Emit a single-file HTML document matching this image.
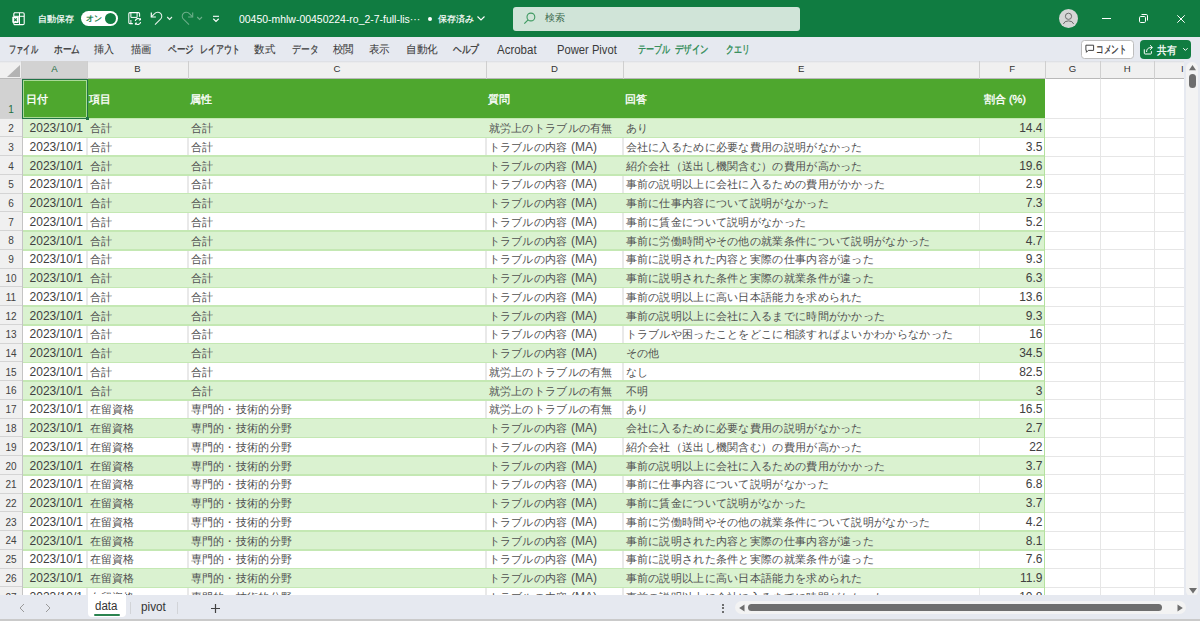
<!DOCTYPE html><html><head><meta charset="utf-8"><style>
*{margin:0;padding:0;box-sizing:border-box}
html,body{width:1200px;height:621px;overflow:hidden;background:#fff;font-family:"Liberation Sans",sans-serif}
.a{position:absolute}
.t{position:absolute;white-space:nowrap;line-height:1}
svg{position:absolute;overflow:visible}
</style></head><body>
<div class="a" style="left:0;top:0;width:1200px;height:37px;background:#107C41"></div>
<svg style="left:8px;top:8px" width="22" height="22" viewBox="0 0 22 22">
<path d="M6.4 4.8 H15 a1.2 1.2 0 0 1 1.2 1.2 V15.4 a1.2 1.2 0 0 1 -1.2 1.2 H7 a1.2 1.2 0 0 1 -1.2 -1.2 V14.5" fill="none" stroke="#fff" stroke-width="1.1"/>
<path d="M5.8 8.5 V6 a1.2 1.2 0 0 1 1.2 -1.2" fill="none" stroke="#fff" stroke-width="1.1"/>
<path d="M11.5 4.8 V16.6 M5.8 8.3 H16.2" stroke="#fff" stroke-width="1"/>
<rect x="4.3" y="8.6" width="6.4" height="6.4" rx="1" fill="#fff"/>
<path d="M6.2 10.5 L8.8 13.1 M8.8 10.5 L6.2 13.1" stroke="#107C41" stroke-width="1.1"/>
</svg>
<span class="t" id="t_autosave" style="left:38.00px;top:15.00px;font-size:9.1px;color:#fff;-webkit-text-stroke:0.2px #fff;">自動保存</span>
<div class="a" style="left:81px;top:10.5px;width:37px;height:15.5px;border-radius:8px;background:#fff"></div>
<div class="a" style="left:104.5px;top:13px;width:11px;height:11px;border-radius:50%;background:#107C41"></div>
<span class="t" id="t_on" style="left:86.00px;top:15.19px;font-size:7.6px;color:#107C41;-webkit-text-stroke:0.3px #107C41;">オン</span>
<svg style="left:124px;top:8px" width="22" height="22" viewBox="0 0 22 22">
<path d="M8.8 15.6 H6 a1.2 1.2 0 0 1 -1.2 -1.2 V5.8 a1.2 1.2 0 0 1 1.2 -1.2 H14.4 a1.2 1.2 0 0 1 1.2 1.2 V8.8" fill="none" stroke="#fff" stroke-width="1.05"/>
<path d="M6.9 4.6 V9.4 H13.1 V4.6" fill="none" stroke="#fff" stroke-width="1"/>
<path d="M6.9 15.6 V12" fill="none" stroke="#fff" stroke-width="1"/>
<path d="M11.3 13 a2.8 2.8 0 0 1 5 -1.4" fill="none" stroke="#fff" stroke-width="1.1"/>
<path d="M16.6 14 a2.8 2.8 0 0 1 -5 1.4" fill="none" stroke="#fff" stroke-width="1.1"/>
<path d="M16.5 10.3 V12 H14.8" fill="none" stroke="#fff" stroke-width="1"/>
<path d="M11.4 16.8 V15.1 H13.1" fill="none" stroke="#fff" stroke-width="1"/>
</svg>
<svg style="left:146px;top:8px" width="30" height="22" viewBox="0 0 30 22">
<path d="M5.3 4.6 V9 H9.9" fill="none" stroke="#fff" stroke-width="1.2"/>
<path d="M5.4 8.9 L8.6 5.7 A4.05 4.05 0 1 1 14.3 11.4 L9 16.6" fill="none" stroke="#fff" stroke-width="1.05" opacity="0.9"/>
<path d="M21.2 9 L23.6 11.5 L26 9" fill="none" stroke="#fff" stroke-width="1.1" opacity="0.9"/>
</svg>
<svg style="left:176px;top:8px" width="30" height="22" viewBox="0 0 30 22" opacity="0.38">
<path d="M16.7 4.6 V9 H12.1" fill="none" stroke="#fff" stroke-width="1.1"/>
<path d="M16.6 8.9 L13.4 5.7 A4.05 4.05 0 1 0 7.7 11.4 L13 16.6" fill="none" stroke="#fff" stroke-width="1.05"/>
<path d="M21.2 9 L23.6 11.5 L26 9" fill="none" stroke="#fff" stroke-width="1.1"/>
</svg>
<svg style="left:208px;top:8px" width="16" height="22" viewBox="0 0 16 22"><path d="M5 8.3 H11" stroke="#fff" stroke-width="1.1"/><path d="M5.3 10.8 L8 13.4 L10.7 10.8" fill="none" stroke="#fff" stroke-width="1.2"/></svg>
<span class="t" id="t_fname" style="left:239.00px;top:13.60px;font-size:10.5px;color:#fff;transform:scaleX(0.9951);transform-origin:0 0;">00450-mhlw-00450224-ro_2-7-full-lis···</span>
<div class="a" style="left:428.3px;top:17.4px;width:3.8px;height:3.8px;border-radius:50%;background:#fff"></div>
<span class="t" id="t_saved" style="left:438.00px;top:15.39px;font-size:9px;color:#fff;-webkit-text-stroke:0.2px #fff;">保存済み</span>
<svg style="left:474px;top:12px" width="14" height="12" viewBox="0 0 14 12"><path d="M3.5 4.5 L7 8 L10.5 4.5" fill="none" stroke="#fff" stroke-width="1.1"/></svg>
<div class="a" style="left:513.3px;top:7px;width:287px;height:23.5px;border-radius:3px;background:#D0E4D8"></div>
<svg style="left:515px;top:6px" width="30" height="26" viewBox="0 0 30 26">
<circle cx="15.9" cy="11" r="3.9" fill="none" stroke="#3F9A62" stroke-width="1.1"/>
<path d="M13.1 13.8 L9.3 17.6" stroke="#3F9A62" stroke-width="1.2"/>
</svg>
<span class="t" id="t_search" style="left:545.00px;top:13.00px;font-size:10.3px;color:#3B6A4E;">検索</span>
<div class="a" style="left:1059.3px;top:9px;width:19px;height:19px;border-radius:50%;background:#D6D6D6"></div>
<svg style="left:1059.3px;top:9px" width="19" height="19" viewBox="0 0 19 19">
<circle cx="9.5" cy="7.3" r="3.1" fill="none" stroke="#6b6b6b" stroke-width="1"/>
<path d="M4.3 15 a5.4 4.3 0 0 1 10.4 0" fill="none" stroke="#6b6b6b" stroke-width="1"/>
</svg>
<div class="a" style="left:1102px;top:18px;width:8.5px;height:1px;background:#fff"></div>
<svg style="left:1138px;top:13px" width="11" height="11" viewBox="0 0 11 11">
<rect x="1.5" y="3.5" width="6" height="6" rx="1.2" fill="none" stroke="#fff" stroke-width="1"/>
<path d="M3.5 1.5 H8.2 a1.3 1.3 0 0 1 1.3 1.3 V7.5" fill="none" stroke="#fff" stroke-width="1"/>
</svg>
<svg style="left:1176px;top:14px" width="10" height="10" viewBox="0 0 10 10">
<path d="M1.3 1.3 L8.7 8.7 M8.7 1.3 L1.3 8.7" stroke="#fff" stroke-width="1"/>
</svg>
<div class="a" style="left:0;top:37px;width:1200px;height:24px;background:#E6E9F0"></div>
<span class="t" id="tab0" style="left:8.93px;top:44.20px;font-size:11px;color:#3a3a3a;transform:scaleX(0.6557);transform-origin:0 0;-webkit-text-stroke:0.35px currentColor;">ファイル</span>
<span class="t" id="tab1" style="left:53.79px;top:44.20px;font-size:11px;color:#3a3a3a;transform:scaleX(0.7879);transform-origin:0 0;-webkit-text-stroke:0.35px currentColor;">ホーム</span>
<span class="t" id="tab2" style="left:94.41px;top:44.20px;font-size:11px;color:#3a3a3a;transform:scaleX(0.9136);transform-origin:0 0;-webkit-text-stroke:0.05px currentColor;">挿入</span>
<span class="t" id="tab3" style="left:131.00px;top:44.20px;font-size:11px;color:#3a3a3a;transform:scaleX(0.9409);transform-origin:0 0;-webkit-text-stroke:0.05px currentColor;">描画</span>
<span class="t" id="tab4" style="left:168.29px;top:44.20px;font-size:11px;color:#3a3a3a;transform:scaleX(0.7735);transform-origin:0 0;-webkit-text-stroke:0.35px currentColor;">ページ</span>
<span class="t" id="tab5" style="left:199.72px;top:44.20px;font-size:11px;color:#3a3a3a;transform:scaleX(0.7222);transform-origin:0 0;-webkit-text-stroke:0.35px currentColor;">レイアウト</span>
<span class="t" id="tab6" style="left:254.40px;top:44.20px;font-size:11px;color:#3a3a3a;transform:scaleX(0.9568);transform-origin:0 0;-webkit-text-stroke:0.05px currentColor;">数式</span>
<span class="t" id="tab7" style="left:292.00px;top:44.20px;font-size:11px;color:#3a3a3a;transform:scaleX(0.8000);transform-origin:0 0;-webkit-text-stroke:0.2px currentColor;">データ</span>
<span class="t" id="tab8" style="left:333.38px;top:44.20px;font-size:11px;color:#3a3a3a;transform:scaleX(0.9545);transform-origin:0 0;-webkit-text-stroke:0.05px currentColor;">校閲</span>
<span class="t" id="tab9" style="left:369.21px;top:44.20px;font-size:11px;color:#3a3a3a;transform:scaleX(0.9545);transform-origin:0 0;-webkit-text-stroke:0.05px currentColor;">表示</span>
<span class="t" id="tab10" style="left:405.81px;top:44.20px;font-size:11px;color:#3a3a3a;transform:scaleX(0.9625);transform-origin:0 0;-webkit-text-stroke:0.05px currentColor;">自動化</span>
<span class="t" id="tab11" style="left:452.71px;top:44.20px;font-size:11px;color:#3a3a3a;transform:scaleX(0.7941);transform-origin:0 0;-webkit-text-stroke:0.35px currentColor;">ヘルプ</span>
<span class="t" id="tabA" style="left:496.58px;top:44.00px;font-size:12px;color:#3a3a3a;transform:scaleX(0.9571);transform-origin:0 0;">Acrobat</span>
<span class="t" id="tabP" style="left:557.00px;top:44.00px;font-size:12px;color:#3a3a3a;transform:scaleX(0.9338);transform-origin:0 0;">Power Pivot</span>
<span class="t" id="tab_td1" style="left:637.69px;top:44.20px;font-size:11px;color:#2B8A52;transform:scaleX(0.7304);transform-origin:0 0;-webkit-text-stroke:0.35px currentColor;">テーブル</span>
<span class="t" id="tab_td2" style="left:675.00px;top:44.20px;font-size:11px;color:#2B8A52;transform:scaleX(0.7628);transform-origin:0 0;-webkit-text-stroke:0.35px currentColor;">デザイン</span>
<span class="t" id="tab_q" style="left:726.28px;top:44.20px;font-size:11px;color:#2B8A52;transform:scaleX(0.7200);transform-origin:0 0;-webkit-text-stroke:0.35px currentColor;">クエリ</span>
<div class="a" style="left:1081.25px;top:40.25px;width:52.25px;height:18.25px;border-radius:3.5px;background:#fff;border:1px solid #BDBDBD"></div>
<svg style="left:1080px;top:38px" width="20" height="20" viewBox="0 0 20 20">
<path d="M5.9 7.2 H13.6 V12.4 H8.3 L6.4 14.3 V12.4 H5.9 Z" fill="none" stroke="#424242" stroke-width="1"/>
</svg>
<span class="t" id="t_comment" style="left:1096.46px;top:44.20px;font-size:11px;color:#333;transform:scaleX(0.6932);transform-origin:0 0;-webkit-text-stroke:0.3px #333;">コメント</span>
<div class="a" style="left:1140px;top:39.75px;width:50.75px;height:19px;border-radius:4px;background:#107C41"></div>
<svg style="left:1138px;top:38px" width="20" height="20" viewBox="0 0 20 20">
<path d="M6.3 11.3 V15.2 a0.8 0.8 0 0 0 0.8 0.8 H12.6 a0.8 0.8 0 0 0 0.8 -0.8 V13.2" fill="none" stroke="#fff" stroke-width="1"/>
<path d="M8.6 14 C8.6 10.5 10.5 9.5 14.2 9.5" fill="none" stroke="#fff" stroke-width="1"/>
<path d="M12 7.2 L14.4 9.5 L12 11.8" fill="none" stroke="#fff" stroke-width="1"/>
</svg>
<span class="t" id="t_share" style="left:1157.41px;top:44.50px;font-size:10.5px;color:#fff;transform:scaleX(0.8804);transform-origin:0 0;-webkit-text-stroke:0.3px #fff;">共有</span>
<svg style="left:1138px;top:38px" width="60" height="20" viewBox="0 0 60 20"><path d="M45.2 10.2 L47.4 12.4 L49.6 10.2" fill="none" stroke="#fff" stroke-width="1"/></svg>
<div class="a" style="left:0;top:61px;width:1184px;height:18px;background:#F0F0F0;border-bottom:1px solid #B9B9B9"></div>
<div class="a" style="left:0;top:61px;width:1184px;height:2px;background:linear-gradient(#D9DCE2,rgba(240,240,240,0))"></div>
<svg style="left:5px;top:64px" width="16" height="14" viewBox="0 0 16 14"><path d="M15 1 V13 H2 Z" fill="#B3B3B3"/></svg>
<div class="a" style="left:21px;top:61px;width:1px;height:18px;background:#CFCFCF"></div>
<div class="a" style="left:22px;top:61px;width:65px;height:18px;background:#D2D2D2;border-bottom:1px solid #B9B9B9"></div>
<div class="a" style="left:86.5px;top:61px;width:1px;height:18px;background:#CFCFCF"></div>
<span class="t" style="left:22px;top:64px;width:65px;text-align:center;font-size:9.6px;color:#1E6E42">A</span>
<div class="a" style="left:187.5px;top:61px;width:1px;height:18px;background:#CFCFCF"></div>
<span class="t" style="left:87px;top:64px;width:101px;text-align:center;font-size:9.6px;color:#333">B</span>
<div class="a" style="left:485.5px;top:61px;width:1px;height:18px;background:#CFCFCF"></div>
<span class="t" style="left:188px;top:64px;width:298px;text-align:center;font-size:9.6px;color:#333">C</span>
<div class="a" style="left:622.5px;top:61px;width:1px;height:18px;background:#CFCFCF"></div>
<span class="t" style="left:486px;top:64px;width:137px;text-align:center;font-size:9.6px;color:#333">D</span>
<div class="a" style="left:979.0px;top:61px;width:1px;height:18px;background:#CFCFCF"></div>
<span class="t" style="left:623px;top:64px;width:356.5px;text-align:center;font-size:9.6px;color:#333">E</span>
<div class="a" style="left:1044.5px;top:61px;width:1px;height:18px;background:#CFCFCF"></div>
<span class="t" style="left:979.5px;top:64px;width:65.5px;text-align:center;font-size:9.6px;color:#333">F</span>
<div class="a" style="left:1099.5px;top:61px;width:1px;height:18px;background:#CFCFCF"></div>
<span class="t" style="left:1045px;top:64px;width:55px;text-align:center;font-size:9.6px;color:#333">G</span>
<div class="a" style="left:1154.0px;top:61px;width:1px;height:18px;background:#CFCFCF"></div>
<span class="t" style="left:1100px;top:64px;width:54.5px;text-align:center;font-size:9.6px;color:#333">H</span>
<div class="a" style="left:1209.5px;top:61px;width:1px;height:18px;background:#CFCFCF"></div>
<span class="t" style="left:1154.5px;top:64px;width:55.5px;text-align:center;font-size:9.6px;color:#333">I</span>
<div class="a" style="left:0;top:79px;width:22px;height:516px;background:#F0F0F0"></div>
<div class="a" style="left:0;top:79px;width:22px;height:39.5px;background:#D2D2D2"></div>
<span class="t" style="left:0;top:105px;width:22px;text-align:center;font-size:10px;color:#1E6E42">1</span>
<div class="a" style="left:0;top:117.5px;width:22px;height:1px;background:#D4D4D4"></div>
<span class="t" style="left:0;top:124px;width:22px;text-align:center;font-size:10px;color:#424242">2</span>
<div class="a" style="left:0;top:136.25px;width:22px;height:1px;background:#D4D4D4"></div>
<span class="t" style="left:0;top:143px;width:22px;text-align:center;font-size:10px;color:#424242">3</span>
<div class="a" style="left:0;top:155.0px;width:22px;height:1px;background:#D4D4D4"></div>
<span class="t" style="left:0;top:162px;width:22px;text-align:center;font-size:10px;color:#424242">4</span>
<div class="a" style="left:0;top:173.75px;width:22px;height:1px;background:#D4D4D4"></div>
<span class="t" style="left:0;top:180px;width:22px;text-align:center;font-size:10px;color:#424242">5</span>
<div class="a" style="left:0;top:192.5px;width:22px;height:1px;background:#D4D4D4"></div>
<span class="t" style="left:0;top:199px;width:22px;text-align:center;font-size:10px;color:#424242">6</span>
<div class="a" style="left:0;top:211.25px;width:22px;height:1px;background:#D4D4D4"></div>
<span class="t" style="left:0;top:218px;width:22px;text-align:center;font-size:10px;color:#424242">7</span>
<div class="a" style="left:0;top:230.0px;width:22px;height:1px;background:#D4D4D4"></div>
<span class="t" style="left:0;top:236px;width:22px;text-align:center;font-size:10px;color:#424242">8</span>
<div class="a" style="left:0;top:248.75px;width:22px;height:1px;background:#D4D4D4"></div>
<span class="t" style="left:0;top:255px;width:22px;text-align:center;font-size:10px;color:#424242">9</span>
<div class="a" style="left:0;top:267.5px;width:22px;height:1px;background:#D4D4D4"></div>
<span class="t" style="left:0;top:274px;width:22px;text-align:center;font-size:10px;color:#424242">10</span>
<div class="a" style="left:0;top:286.25px;width:22px;height:1px;background:#D4D4D4"></div>
<span class="t" style="left:0;top:293px;width:22px;text-align:center;font-size:10px;color:#424242">11</span>
<div class="a" style="left:0;top:305.0px;width:22px;height:1px;background:#D4D4D4"></div>
<span class="t" style="left:0;top:312px;width:22px;text-align:center;font-size:10px;color:#424242">12</span>
<div class="a" style="left:0;top:323.75px;width:22px;height:1px;background:#D4D4D4"></div>
<span class="t" style="left:0;top:330px;width:22px;text-align:center;font-size:10px;color:#424242">13</span>
<div class="a" style="left:0;top:342.5px;width:22px;height:1px;background:#D4D4D4"></div>
<span class="t" style="left:0;top:349px;width:22px;text-align:center;font-size:10px;color:#424242">14</span>
<div class="a" style="left:0;top:361.25px;width:22px;height:1px;background:#D4D4D4"></div>
<span class="t" style="left:0;top:368px;width:22px;text-align:center;font-size:10px;color:#424242">15</span>
<div class="a" style="left:0;top:380.0px;width:22px;height:1px;background:#D4D4D4"></div>
<span class="t" style="left:0;top:386px;width:22px;text-align:center;font-size:10px;color:#424242">16</span>
<div class="a" style="left:0;top:398.75px;width:22px;height:1px;background:#D4D4D4"></div>
<span class="t" style="left:0;top:405px;width:22px;text-align:center;font-size:10px;color:#424242">17</span>
<div class="a" style="left:0;top:417.5px;width:22px;height:1px;background:#D4D4D4"></div>
<span class="t" style="left:0;top:424px;width:22px;text-align:center;font-size:10px;color:#424242">18</span>
<div class="a" style="left:0;top:436.25px;width:22px;height:1px;background:#D4D4D4"></div>
<span class="t" style="left:0;top:443px;width:22px;text-align:center;font-size:10px;color:#424242">19</span>
<div class="a" style="left:0;top:455.0px;width:22px;height:1px;background:#D4D4D4"></div>
<span class="t" style="left:0;top:462px;width:22px;text-align:center;font-size:10px;color:#424242">20</span>
<div class="a" style="left:0;top:473.75px;width:22px;height:1px;background:#D4D4D4"></div>
<span class="t" style="left:0;top:480px;width:22px;text-align:center;font-size:10px;color:#424242">21</span>
<div class="a" style="left:0;top:492.5px;width:22px;height:1px;background:#D4D4D4"></div>
<span class="t" style="left:0;top:499px;width:22px;text-align:center;font-size:10px;color:#424242">22</span>
<div class="a" style="left:0;top:511.25px;width:22px;height:1px;background:#D4D4D4"></div>
<span class="t" style="left:0;top:518px;width:22px;text-align:center;font-size:10px;color:#424242">23</span>
<div class="a" style="left:0;top:530.0px;width:22px;height:1px;background:#D4D4D4"></div>
<span class="t" style="left:0;top:536px;width:22px;text-align:center;font-size:10px;color:#424242">24</span>
<div class="a" style="left:0;top:548.75px;width:22px;height:1px;background:#D4D4D4"></div>
<span class="t" style="left:0;top:555px;width:22px;text-align:center;font-size:10px;color:#424242">25</span>
<div class="a" style="left:0;top:567.5px;width:22px;height:1px;background:#D4D4D4"></div>
<span class="t" style="left:0;top:574px;width:22px;text-align:center;font-size:10px;color:#424242">26</span>
<div class="a" style="left:0;top:586.25px;width:22px;height:1px;background:#D4D4D4"></div>
<span class="t" style="left:0;top:593px;width:22px;text-align:center;font-size:10px;color:#424242">27</span>
<div class="a" style="left:0;top:605.0px;width:22px;height:1px;background:#D4D4D4"></div>
<span class="t" style="left:0;top:612px;width:22px;text-align:center;font-size:10px;color:#424242">28</span>
<div class="a" style="left:1045px;top:118.0px;width:139px;height:1px;background:#E6E6E6"></div>
<div class="a" style="left:1045px;top:136.75px;width:139px;height:1px;background:#E6E6E6"></div>
<div class="a" style="left:1045px;top:155.5px;width:139px;height:1px;background:#E6E6E6"></div>
<div class="a" style="left:1045px;top:174.25px;width:139px;height:1px;background:#E6E6E6"></div>
<div class="a" style="left:1045px;top:193.0px;width:139px;height:1px;background:#E6E6E6"></div>
<div class="a" style="left:1045px;top:211.75px;width:139px;height:1px;background:#E6E6E6"></div>
<div class="a" style="left:1045px;top:230.5px;width:139px;height:1px;background:#E6E6E6"></div>
<div class="a" style="left:1045px;top:249.25px;width:139px;height:1px;background:#E6E6E6"></div>
<div class="a" style="left:1045px;top:268.0px;width:139px;height:1px;background:#E6E6E6"></div>
<div class="a" style="left:1045px;top:286.75px;width:139px;height:1px;background:#E6E6E6"></div>
<div class="a" style="left:1045px;top:305.5px;width:139px;height:1px;background:#E6E6E6"></div>
<div class="a" style="left:1045px;top:324.25px;width:139px;height:1px;background:#E6E6E6"></div>
<div class="a" style="left:1045px;top:343.0px;width:139px;height:1px;background:#E6E6E6"></div>
<div class="a" style="left:1045px;top:361.75px;width:139px;height:1px;background:#E6E6E6"></div>
<div class="a" style="left:1045px;top:380.5px;width:139px;height:1px;background:#E6E6E6"></div>
<div class="a" style="left:1045px;top:399.25px;width:139px;height:1px;background:#E6E6E6"></div>
<div class="a" style="left:1045px;top:418.0px;width:139px;height:1px;background:#E6E6E6"></div>
<div class="a" style="left:1045px;top:436.75px;width:139px;height:1px;background:#E6E6E6"></div>
<div class="a" style="left:1045px;top:455.5px;width:139px;height:1px;background:#E6E6E6"></div>
<div class="a" style="left:1045px;top:474.25px;width:139px;height:1px;background:#E6E6E6"></div>
<div class="a" style="left:1045px;top:493.0px;width:139px;height:1px;background:#E6E6E6"></div>
<div class="a" style="left:1045px;top:511.75px;width:139px;height:1px;background:#E6E6E6"></div>
<div class="a" style="left:1045px;top:530.5px;width:139px;height:1px;background:#E6E6E6"></div>
<div class="a" style="left:1045px;top:549.25px;width:139px;height:1px;background:#E6E6E6"></div>
<div class="a" style="left:1045px;top:568.0px;width:139px;height:1px;background:#E6E6E6"></div>
<div class="a" style="left:1045px;top:586.75px;width:139px;height:1px;background:#E6E6E6"></div>
<div class="a" style="left:1045px;top:605.5px;width:139px;height:1px;background:#E6E6E6"></div>
<div class="a" style="left:1045px;top:624.25px;width:139px;height:1px;background:#E6E6E6"></div>
<div class="a" style="left:1099.5px;top:79px;width:1px;height:516px;background:#E6E6E6"></div>
<div class="a" style="left:1154.0px;top:79px;width:1px;height:516px;background:#E6E6E6"></div>
<div class="a" style="left:22px;top:79px;width:1023px;height:39.5px;background:#4EA72E"></div>
<span class="t" style="left:26.0px;top:93.5px;font-size:11px;color:#fff;-webkit-text-stroke:0.35px #fff">日付</span>
<span class="t" style="left:88.8px;top:93.5px;font-size:11px;color:#fff;-webkit-text-stroke:0.35px #fff">項目</span>
<span class="t" style="left:189.8px;top:93.5px;font-size:11px;color:#fff;-webkit-text-stroke:0.35px #fff">属性</span>
<span class="t" style="left:487.8px;top:93.5px;font-size:11px;color:#fff;-webkit-text-stroke:0.35px #fff">質問</span>
<span class="t" style="left:624.8px;top:93.5px;font-size:11px;color:#fff;-webkit-text-stroke:0.35px #fff">回答</span>
<span class="t" style="left:940px;top:93.5px;width:86px;text-align:right;font-size:11px;color:#fff;-webkit-text-stroke:0.35px #fff">割合 (%)</span>
<div class="a" style="left:22px;top:118.5px;width:1023px;height:18.75px;background:#DAF2D0"></div>
<div class="a" style="left:22px;top:117.75px;width:1023px;height:1.5px;background:#C4E8B3"></div>
<div class="a" style="left:22px;top:137.25px;width:1023px;height:18.75px;background:#FFFFFF"></div>
<div class="a" style="left:86.25px;top:137.25px;width:1.25px;height:18.75px;background:#E9E9E9"></div>
<div class="a" style="left:187.25px;top:137.25px;width:1.25px;height:18.75px;background:#E9E9E9"></div>
<div class="a" style="left:485.25px;top:137.25px;width:1.25px;height:18.75px;background:#E9E9E9"></div>
<div class="a" style="left:622.25px;top:137.25px;width:1.25px;height:18.75px;background:#E9E9E9"></div>
<div class="a" style="left:978.75px;top:137.25px;width:1.25px;height:18.75px;background:#E9E9E9"></div>
<div class="a" style="left:22px;top:136.5px;width:1023px;height:1.5px;background:#C4E8B3"></div>
<div class="a" style="left:22px;top:156.0px;width:1023px;height:18.75px;background:#DAF2D0"></div>
<div class="a" style="left:22px;top:155.25px;width:1023px;height:1.5px;background:#C4E8B3"></div>
<div class="a" style="left:22px;top:174.75px;width:1023px;height:18.75px;background:#FFFFFF"></div>
<div class="a" style="left:86.25px;top:174.75px;width:1.25px;height:18.75px;background:#E9E9E9"></div>
<div class="a" style="left:187.25px;top:174.75px;width:1.25px;height:18.75px;background:#E9E9E9"></div>
<div class="a" style="left:485.25px;top:174.75px;width:1.25px;height:18.75px;background:#E9E9E9"></div>
<div class="a" style="left:622.25px;top:174.75px;width:1.25px;height:18.75px;background:#E9E9E9"></div>
<div class="a" style="left:978.75px;top:174.75px;width:1.25px;height:18.75px;background:#E9E9E9"></div>
<div class="a" style="left:22px;top:174.0px;width:1023px;height:1.5px;background:#C4E8B3"></div>
<div class="a" style="left:22px;top:193.5px;width:1023px;height:18.75px;background:#DAF2D0"></div>
<div class="a" style="left:22px;top:192.75px;width:1023px;height:1.5px;background:#C4E8B3"></div>
<div class="a" style="left:22px;top:212.25px;width:1023px;height:18.75px;background:#FFFFFF"></div>
<div class="a" style="left:86.25px;top:212.25px;width:1.25px;height:18.75px;background:#E9E9E9"></div>
<div class="a" style="left:187.25px;top:212.25px;width:1.25px;height:18.75px;background:#E9E9E9"></div>
<div class="a" style="left:485.25px;top:212.25px;width:1.25px;height:18.75px;background:#E9E9E9"></div>
<div class="a" style="left:622.25px;top:212.25px;width:1.25px;height:18.75px;background:#E9E9E9"></div>
<div class="a" style="left:978.75px;top:212.25px;width:1.25px;height:18.75px;background:#E9E9E9"></div>
<div class="a" style="left:22px;top:211.5px;width:1023px;height:1.5px;background:#C4E8B3"></div>
<div class="a" style="left:22px;top:231.0px;width:1023px;height:18.75px;background:#DAF2D0"></div>
<div class="a" style="left:22px;top:230.25px;width:1023px;height:1.5px;background:#C4E8B3"></div>
<div class="a" style="left:22px;top:249.75px;width:1023px;height:18.75px;background:#FFFFFF"></div>
<div class="a" style="left:86.25px;top:249.75px;width:1.25px;height:18.75px;background:#E9E9E9"></div>
<div class="a" style="left:187.25px;top:249.75px;width:1.25px;height:18.75px;background:#E9E9E9"></div>
<div class="a" style="left:485.25px;top:249.75px;width:1.25px;height:18.75px;background:#E9E9E9"></div>
<div class="a" style="left:622.25px;top:249.75px;width:1.25px;height:18.75px;background:#E9E9E9"></div>
<div class="a" style="left:978.75px;top:249.75px;width:1.25px;height:18.75px;background:#E9E9E9"></div>
<div class="a" style="left:22px;top:249.0px;width:1023px;height:1.5px;background:#C4E8B3"></div>
<div class="a" style="left:22px;top:268.5px;width:1023px;height:18.75px;background:#DAF2D0"></div>
<div class="a" style="left:22px;top:267.75px;width:1023px;height:1.5px;background:#C4E8B3"></div>
<div class="a" style="left:22px;top:287.25px;width:1023px;height:18.75px;background:#FFFFFF"></div>
<div class="a" style="left:86.25px;top:287.25px;width:1.25px;height:18.75px;background:#E9E9E9"></div>
<div class="a" style="left:187.25px;top:287.25px;width:1.25px;height:18.75px;background:#E9E9E9"></div>
<div class="a" style="left:485.25px;top:287.25px;width:1.25px;height:18.75px;background:#E9E9E9"></div>
<div class="a" style="left:622.25px;top:287.25px;width:1.25px;height:18.75px;background:#E9E9E9"></div>
<div class="a" style="left:978.75px;top:287.25px;width:1.25px;height:18.75px;background:#E9E9E9"></div>
<div class="a" style="left:22px;top:286.5px;width:1023px;height:1.5px;background:#C4E8B3"></div>
<div class="a" style="left:22px;top:306.0px;width:1023px;height:18.75px;background:#DAF2D0"></div>
<div class="a" style="left:22px;top:305.25px;width:1023px;height:1.5px;background:#C4E8B3"></div>
<div class="a" style="left:22px;top:324.75px;width:1023px;height:18.75px;background:#FFFFFF"></div>
<div class="a" style="left:86.25px;top:324.75px;width:1.25px;height:18.75px;background:#E9E9E9"></div>
<div class="a" style="left:187.25px;top:324.75px;width:1.25px;height:18.75px;background:#E9E9E9"></div>
<div class="a" style="left:485.25px;top:324.75px;width:1.25px;height:18.75px;background:#E9E9E9"></div>
<div class="a" style="left:622.25px;top:324.75px;width:1.25px;height:18.75px;background:#E9E9E9"></div>
<div class="a" style="left:978.75px;top:324.75px;width:1.25px;height:18.75px;background:#E9E9E9"></div>
<div class="a" style="left:22px;top:324.0px;width:1023px;height:1.5px;background:#C4E8B3"></div>
<div class="a" style="left:22px;top:343.5px;width:1023px;height:18.75px;background:#DAF2D0"></div>
<div class="a" style="left:22px;top:342.75px;width:1023px;height:1.5px;background:#C4E8B3"></div>
<div class="a" style="left:22px;top:362.25px;width:1023px;height:18.75px;background:#FFFFFF"></div>
<div class="a" style="left:86.25px;top:362.25px;width:1.25px;height:18.75px;background:#E9E9E9"></div>
<div class="a" style="left:187.25px;top:362.25px;width:1.25px;height:18.75px;background:#E9E9E9"></div>
<div class="a" style="left:485.25px;top:362.25px;width:1.25px;height:18.75px;background:#E9E9E9"></div>
<div class="a" style="left:622.25px;top:362.25px;width:1.25px;height:18.75px;background:#E9E9E9"></div>
<div class="a" style="left:978.75px;top:362.25px;width:1.25px;height:18.75px;background:#E9E9E9"></div>
<div class="a" style="left:22px;top:361.5px;width:1023px;height:1.5px;background:#C4E8B3"></div>
<div class="a" style="left:22px;top:381.0px;width:1023px;height:18.75px;background:#DAF2D0"></div>
<div class="a" style="left:22px;top:380.25px;width:1023px;height:1.5px;background:#C4E8B3"></div>
<div class="a" style="left:22px;top:399.75px;width:1023px;height:18.75px;background:#FFFFFF"></div>
<div class="a" style="left:86.25px;top:399.75px;width:1.25px;height:18.75px;background:#E9E9E9"></div>
<div class="a" style="left:187.25px;top:399.75px;width:1.25px;height:18.75px;background:#E9E9E9"></div>
<div class="a" style="left:485.25px;top:399.75px;width:1.25px;height:18.75px;background:#E9E9E9"></div>
<div class="a" style="left:622.25px;top:399.75px;width:1.25px;height:18.75px;background:#E9E9E9"></div>
<div class="a" style="left:978.75px;top:399.75px;width:1.25px;height:18.75px;background:#E9E9E9"></div>
<div class="a" style="left:22px;top:399.0px;width:1023px;height:1.5px;background:#C4E8B3"></div>
<div class="a" style="left:22px;top:418.5px;width:1023px;height:18.75px;background:#DAF2D0"></div>
<div class="a" style="left:22px;top:417.75px;width:1023px;height:1.5px;background:#C4E8B3"></div>
<div class="a" style="left:22px;top:437.25px;width:1023px;height:18.75px;background:#FFFFFF"></div>
<div class="a" style="left:86.25px;top:437.25px;width:1.25px;height:18.75px;background:#E9E9E9"></div>
<div class="a" style="left:187.25px;top:437.25px;width:1.25px;height:18.75px;background:#E9E9E9"></div>
<div class="a" style="left:485.25px;top:437.25px;width:1.25px;height:18.75px;background:#E9E9E9"></div>
<div class="a" style="left:622.25px;top:437.25px;width:1.25px;height:18.75px;background:#E9E9E9"></div>
<div class="a" style="left:978.75px;top:437.25px;width:1.25px;height:18.75px;background:#E9E9E9"></div>
<div class="a" style="left:22px;top:436.5px;width:1023px;height:1.5px;background:#C4E8B3"></div>
<div class="a" style="left:22px;top:456.0px;width:1023px;height:18.75px;background:#DAF2D0"></div>
<div class="a" style="left:22px;top:455.25px;width:1023px;height:1.5px;background:#C4E8B3"></div>
<div class="a" style="left:22px;top:474.75px;width:1023px;height:18.75px;background:#FFFFFF"></div>
<div class="a" style="left:86.25px;top:474.75px;width:1.25px;height:18.75px;background:#E9E9E9"></div>
<div class="a" style="left:187.25px;top:474.75px;width:1.25px;height:18.75px;background:#E9E9E9"></div>
<div class="a" style="left:485.25px;top:474.75px;width:1.25px;height:18.75px;background:#E9E9E9"></div>
<div class="a" style="left:622.25px;top:474.75px;width:1.25px;height:18.75px;background:#E9E9E9"></div>
<div class="a" style="left:978.75px;top:474.75px;width:1.25px;height:18.75px;background:#E9E9E9"></div>
<div class="a" style="left:22px;top:474.0px;width:1023px;height:1.5px;background:#C4E8B3"></div>
<div class="a" style="left:22px;top:493.5px;width:1023px;height:18.75px;background:#DAF2D0"></div>
<div class="a" style="left:22px;top:492.75px;width:1023px;height:1.5px;background:#C4E8B3"></div>
<div class="a" style="left:22px;top:512.25px;width:1023px;height:18.75px;background:#FFFFFF"></div>
<div class="a" style="left:86.25px;top:512.25px;width:1.25px;height:18.75px;background:#E9E9E9"></div>
<div class="a" style="left:187.25px;top:512.25px;width:1.25px;height:18.75px;background:#E9E9E9"></div>
<div class="a" style="left:485.25px;top:512.25px;width:1.25px;height:18.75px;background:#E9E9E9"></div>
<div class="a" style="left:622.25px;top:512.25px;width:1.25px;height:18.75px;background:#E9E9E9"></div>
<div class="a" style="left:978.75px;top:512.25px;width:1.25px;height:18.75px;background:#E9E9E9"></div>
<div class="a" style="left:22px;top:511.5px;width:1023px;height:1.5px;background:#C4E8B3"></div>
<div class="a" style="left:22px;top:531.0px;width:1023px;height:18.75px;background:#DAF2D0"></div>
<div class="a" style="left:22px;top:530.25px;width:1023px;height:1.5px;background:#C4E8B3"></div>
<div class="a" style="left:22px;top:549.75px;width:1023px;height:18.75px;background:#FFFFFF"></div>
<div class="a" style="left:86.25px;top:549.75px;width:1.25px;height:18.75px;background:#E9E9E9"></div>
<div class="a" style="left:187.25px;top:549.75px;width:1.25px;height:18.75px;background:#E9E9E9"></div>
<div class="a" style="left:485.25px;top:549.75px;width:1.25px;height:18.75px;background:#E9E9E9"></div>
<div class="a" style="left:622.25px;top:549.75px;width:1.25px;height:18.75px;background:#E9E9E9"></div>
<div class="a" style="left:978.75px;top:549.75px;width:1.25px;height:18.75px;background:#E9E9E9"></div>
<div class="a" style="left:22px;top:549.0px;width:1023px;height:1.5px;background:#C4E8B3"></div>
<div class="a" style="left:22px;top:568.5px;width:1023px;height:18.75px;background:#DAF2D0"></div>
<div class="a" style="left:22px;top:567.75px;width:1023px;height:1.5px;background:#C4E8B3"></div>
<div class="a" style="left:22px;top:587.25px;width:1023px;height:18.75px;background:#FFFFFF"></div>
<div class="a" style="left:86.25px;top:587.25px;width:1.25px;height:18.75px;background:#E9E9E9"></div>
<div class="a" style="left:187.25px;top:587.25px;width:1.25px;height:18.75px;background:#E9E9E9"></div>
<div class="a" style="left:485.25px;top:587.25px;width:1.25px;height:18.75px;background:#E9E9E9"></div>
<div class="a" style="left:622.25px;top:587.25px;width:1.25px;height:18.75px;background:#E9E9E9"></div>
<div class="a" style="left:978.75px;top:587.25px;width:1.25px;height:18.75px;background:#E9E9E9"></div>
<div class="a" style="left:22px;top:586.5px;width:1023px;height:1.5px;background:#C4E8B3"></div>
<div class="a" style="left:22px;top:605.25px;width:1023px;height:1.5px;background:#C4E8B3"></div>
<div class="a" style="left:1044px;top:118.5px;width:1px;height:476.5px;background:#B4E19F"></div>
<span class="t" style="left:29.6px;top:122px;font-size:12px;color:#404040">2023/10/1</span>
<span class="t" style="left:89.5px;top:122px;font-size:12px;color:#505050"><span style="font-size:10.9px;letter-spacing:0.3px">合計</span></span>
<span class="t" style="left:190.5px;top:122px;font-size:12px;color:#505050"><span style="font-size:10.9px;letter-spacing:0.3px">合計</span></span>
<span class="t" style="left:488.5px;top:122px;font-size:12px;color:#505050"><span style="font-size:10.9px;letter-spacing:0.3px">就労上のトラブルの有無</span></span>
<span class="t" style="left:625.5px;top:122px;font-size:12px;color:#505050"><span style="font-size:10.9px;letter-spacing:0.3px">あり</span></span>
<span class="t" style="left:960px;top:122px;width:82.5px;text-align:right;font-size:12px;color:#404040">14.4</span>
<span class="t" style="left:29.6px;top:141px;font-size:12px;color:#404040">2023/10/1</span>
<span class="t" style="left:89.5px;top:141px;font-size:12px;color:#505050"><span style="font-size:10.9px;letter-spacing:0.3px">合計</span></span>
<span class="t" style="left:190.5px;top:141px;font-size:12px;color:#505050"><span style="font-size:10.9px;letter-spacing:0.3px">合計</span></span>
<span class="t" style="left:488.5px;top:141px;font-size:12px;color:#505050"><span style="font-size:10.9px;letter-spacing:0.3px">トラブルの内容</span> (MA)</span>
<span class="t" style="left:625.5px;top:141px;font-size:12px;color:#505050"><span style="font-size:10.9px;letter-spacing:0.3px">会社に入るために必要な費用の説明がなかった</span></span>
<span class="t" style="left:960px;top:141px;width:82.5px;text-align:right;font-size:12px;color:#404040">3.5</span>
<span class="t" style="left:29.6px;top:160px;font-size:12px;color:#404040">2023/10/1</span>
<span class="t" style="left:89.5px;top:160px;font-size:12px;color:#505050"><span style="font-size:10.9px;letter-spacing:0.3px">合計</span></span>
<span class="t" style="left:190.5px;top:160px;font-size:12px;color:#505050"><span style="font-size:10.9px;letter-spacing:0.3px">合計</span></span>
<span class="t" style="left:488.5px;top:160px;font-size:12px;color:#505050"><span style="font-size:10.9px;letter-spacing:0.3px">トラブルの内容</span> (MA)</span>
<span class="t" style="left:625.5px;top:160px;font-size:12px;color:#505050"><span style="font-size:10.9px;letter-spacing:0.3px">紹介会社（送出し機関含む）の費用が高かった</span></span>
<span class="t" style="left:960px;top:160px;width:82.5px;text-align:right;font-size:12px;color:#404040">19.6</span>
<span class="t" style="left:29.6px;top:178px;font-size:12px;color:#404040">2023/10/1</span>
<span class="t" style="left:89.5px;top:178px;font-size:12px;color:#505050"><span style="font-size:10.9px;letter-spacing:0.3px">合計</span></span>
<span class="t" style="left:190.5px;top:178px;font-size:12px;color:#505050"><span style="font-size:10.9px;letter-spacing:0.3px">合計</span></span>
<span class="t" style="left:488.5px;top:178px;font-size:12px;color:#505050"><span style="font-size:10.9px;letter-spacing:0.3px">トラブルの内容</span> (MA)</span>
<span class="t" style="left:625.5px;top:178px;font-size:12px;color:#505050"><span style="font-size:10.9px;letter-spacing:0.3px">事前の説明以上に会社に入るための費用がかかった</span></span>
<span class="t" style="left:960px;top:178px;width:82.5px;text-align:right;font-size:12px;color:#404040">2.9</span>
<span class="t" style="left:29.6px;top:197px;font-size:12px;color:#404040">2023/10/1</span>
<span class="t" style="left:89.5px;top:197px;font-size:12px;color:#505050"><span style="font-size:10.9px;letter-spacing:0.3px">合計</span></span>
<span class="t" style="left:190.5px;top:197px;font-size:12px;color:#505050"><span style="font-size:10.9px;letter-spacing:0.3px">合計</span></span>
<span class="t" style="left:488.5px;top:197px;font-size:12px;color:#505050"><span style="font-size:10.9px;letter-spacing:0.3px">トラブルの内容</span> (MA)</span>
<span class="t" style="left:625.5px;top:197px;font-size:12px;color:#505050"><span style="font-size:10.9px;letter-spacing:0.3px">事前に仕事内容について説明がなかった</span></span>
<span class="t" style="left:960px;top:197px;width:82.5px;text-align:right;font-size:12px;color:#404040">7.3</span>
<span class="t" style="left:29.6px;top:216px;font-size:12px;color:#404040">2023/10/1</span>
<span class="t" style="left:89.5px;top:216px;font-size:12px;color:#505050"><span style="font-size:10.9px;letter-spacing:0.3px">合計</span></span>
<span class="t" style="left:190.5px;top:216px;font-size:12px;color:#505050"><span style="font-size:10.9px;letter-spacing:0.3px">合計</span></span>
<span class="t" style="left:488.5px;top:216px;font-size:12px;color:#505050"><span style="font-size:10.9px;letter-spacing:0.3px">トラブルの内容</span> (MA)</span>
<span class="t" style="left:625.5px;top:216px;font-size:12px;color:#505050"><span style="font-size:10.9px;letter-spacing:0.3px">事前に賃金について説明がなかった</span></span>
<span class="t" style="left:960px;top:216px;width:82.5px;text-align:right;font-size:12px;color:#404040">5.2</span>
<span class="t" style="left:29.6px;top:235px;font-size:12px;color:#404040">2023/10/1</span>
<span class="t" style="left:89.5px;top:235px;font-size:12px;color:#505050"><span style="font-size:10.9px;letter-spacing:0.3px">合計</span></span>
<span class="t" style="left:190.5px;top:235px;font-size:12px;color:#505050"><span style="font-size:10.9px;letter-spacing:0.3px">合計</span></span>
<span class="t" style="left:488.5px;top:235px;font-size:12px;color:#505050"><span style="font-size:10.9px;letter-spacing:0.3px">トラブルの内容</span> (MA)</span>
<span class="t" style="left:625.5px;top:235px;font-size:12px;color:#505050"><span style="font-size:10.9px;letter-spacing:0.3px">事前に労働時間やその他の就業条件について説明がなかった</span></span>
<span class="t" style="left:960px;top:235px;width:82.5px;text-align:right;font-size:12px;color:#404040">4.7</span>
<span class="t" style="left:29.6px;top:253px;font-size:12px;color:#404040">2023/10/1</span>
<span class="t" style="left:89.5px;top:253px;font-size:12px;color:#505050"><span style="font-size:10.9px;letter-spacing:0.3px">合計</span></span>
<span class="t" style="left:190.5px;top:253px;font-size:12px;color:#505050"><span style="font-size:10.9px;letter-spacing:0.3px">合計</span></span>
<span class="t" style="left:488.5px;top:253px;font-size:12px;color:#505050"><span style="font-size:10.9px;letter-spacing:0.3px">トラブルの内容</span> (MA)</span>
<span class="t" style="left:625.5px;top:253px;font-size:12px;color:#505050"><span style="font-size:10.9px;letter-spacing:0.3px">事前に説明された内容と実際の仕事内容が違った</span></span>
<span class="t" style="left:960px;top:253px;width:82.5px;text-align:right;font-size:12px;color:#404040">9.3</span>
<span class="t" style="left:29.6px;top:272px;font-size:12px;color:#404040">2023/10/1</span>
<span class="t" style="left:89.5px;top:272px;font-size:12px;color:#505050"><span style="font-size:10.9px;letter-spacing:0.3px">合計</span></span>
<span class="t" style="left:190.5px;top:272px;font-size:12px;color:#505050"><span style="font-size:10.9px;letter-spacing:0.3px">合計</span></span>
<span class="t" style="left:488.5px;top:272px;font-size:12px;color:#505050"><span style="font-size:10.9px;letter-spacing:0.3px">トラブルの内容</span> (MA)</span>
<span class="t" style="left:625.5px;top:272px;font-size:12px;color:#505050"><span style="font-size:10.9px;letter-spacing:0.3px">事前に説明された条件と実際の就業条件が違った</span></span>
<span class="t" style="left:960px;top:272px;width:82.5px;text-align:right;font-size:12px;color:#404040">6.3</span>
<span class="t" style="left:29.6px;top:291px;font-size:12px;color:#404040">2023/10/1</span>
<span class="t" style="left:89.5px;top:291px;font-size:12px;color:#505050"><span style="font-size:10.9px;letter-spacing:0.3px">合計</span></span>
<span class="t" style="left:190.5px;top:291px;font-size:12px;color:#505050"><span style="font-size:10.9px;letter-spacing:0.3px">合計</span></span>
<span class="t" style="left:488.5px;top:291px;font-size:12px;color:#505050"><span style="font-size:10.9px;letter-spacing:0.3px">トラブルの内容</span> (MA)</span>
<span class="t" style="left:625.5px;top:291px;font-size:12px;color:#505050"><span style="font-size:10.9px;letter-spacing:0.3px">事前の説明以上に高い日本語能力を求められた</span></span>
<span class="t" style="left:960px;top:291px;width:82.5px;text-align:right;font-size:12px;color:#404040">13.6</span>
<span class="t" style="left:29.6px;top:310px;font-size:12px;color:#404040">2023/10/1</span>
<span class="t" style="left:89.5px;top:310px;font-size:12px;color:#505050"><span style="font-size:10.9px;letter-spacing:0.3px">合計</span></span>
<span class="t" style="left:190.5px;top:310px;font-size:12px;color:#505050"><span style="font-size:10.9px;letter-spacing:0.3px">合計</span></span>
<span class="t" style="left:488.5px;top:310px;font-size:12px;color:#505050"><span style="font-size:10.9px;letter-spacing:0.3px">トラブルの内容</span> (MA)</span>
<span class="t" style="left:625.5px;top:310px;font-size:12px;color:#505050"><span style="font-size:10.9px;letter-spacing:0.3px">事前の説明以上に会社に入るまでに時間がかかった</span></span>
<span class="t" style="left:960px;top:310px;width:82.5px;text-align:right;font-size:12px;color:#404040">9.3</span>
<span class="t" style="left:29.6px;top:328px;font-size:12px;color:#404040">2023/10/1</span>
<span class="t" style="left:89.5px;top:328px;font-size:12px;color:#505050"><span style="font-size:10.9px;letter-spacing:0.3px">合計</span></span>
<span class="t" style="left:190.5px;top:328px;font-size:12px;color:#505050"><span style="font-size:10.9px;letter-spacing:0.3px">合計</span></span>
<span class="t" style="left:488.5px;top:328px;font-size:12px;color:#505050"><span style="font-size:10.9px;letter-spacing:0.3px">トラブルの内容</span> (MA)</span>
<span class="t" style="left:625.5px;top:328px;font-size:12px;color:#505050"><span style="font-size:10.9px;letter-spacing:0.3px">トラブルや困ったことをどこに相談すればよいかわからなかった</span></span>
<span class="t" style="left:960px;top:328px;width:82.5px;text-align:right;font-size:12px;color:#404040">16</span>
<span class="t" style="left:29.6px;top:347px;font-size:12px;color:#404040">2023/10/1</span>
<span class="t" style="left:89.5px;top:347px;font-size:12px;color:#505050"><span style="font-size:10.9px;letter-spacing:0.3px">合計</span></span>
<span class="t" style="left:190.5px;top:347px;font-size:12px;color:#505050"><span style="font-size:10.9px;letter-spacing:0.3px">合計</span></span>
<span class="t" style="left:488.5px;top:347px;font-size:12px;color:#505050"><span style="font-size:10.9px;letter-spacing:0.3px">トラブルの内容</span> (MA)</span>
<span class="t" style="left:625.5px;top:347px;font-size:12px;color:#505050"><span style="font-size:10.9px;letter-spacing:0.3px">その他</span></span>
<span class="t" style="left:960px;top:347px;width:82.5px;text-align:right;font-size:12px;color:#404040">34.5</span>
<span class="t" style="left:29.6px;top:366px;font-size:12px;color:#404040">2023/10/1</span>
<span class="t" style="left:89.5px;top:366px;font-size:12px;color:#505050"><span style="font-size:10.9px;letter-spacing:0.3px">合計</span></span>
<span class="t" style="left:190.5px;top:366px;font-size:12px;color:#505050"><span style="font-size:10.9px;letter-spacing:0.3px">合計</span></span>
<span class="t" style="left:488.5px;top:366px;font-size:12px;color:#505050"><span style="font-size:10.9px;letter-spacing:0.3px">就労上のトラブルの有無</span></span>
<span class="t" style="left:625.5px;top:366px;font-size:12px;color:#505050"><span style="font-size:10.9px;letter-spacing:0.3px">なし</span></span>
<span class="t" style="left:960px;top:366px;width:82.5px;text-align:right;font-size:12px;color:#404040">82.5</span>
<span class="t" style="left:29.6px;top:385px;font-size:12px;color:#404040">2023/10/1</span>
<span class="t" style="left:89.5px;top:385px;font-size:12px;color:#505050"><span style="font-size:10.9px;letter-spacing:0.3px">合計</span></span>
<span class="t" style="left:190.5px;top:385px;font-size:12px;color:#505050"><span style="font-size:10.9px;letter-spacing:0.3px">合計</span></span>
<span class="t" style="left:488.5px;top:385px;font-size:12px;color:#505050"><span style="font-size:10.9px;letter-spacing:0.3px">就労上のトラブルの有無</span></span>
<span class="t" style="left:625.5px;top:385px;font-size:12px;color:#505050"><span style="font-size:10.9px;letter-spacing:0.3px">不明</span></span>
<span class="t" style="left:960px;top:385px;width:82.5px;text-align:right;font-size:12px;color:#404040">3</span>
<span class="t" style="left:29.6px;top:403px;font-size:12px;color:#404040">2023/10/1</span>
<span class="t" style="left:89.5px;top:403px;font-size:12px;color:#505050"><span style="font-size:10.9px;letter-spacing:0.3px">在留資格</span></span>
<span class="t" style="left:190.5px;top:403px;font-size:12px;color:#505050"><span style="font-size:10.9px;letter-spacing:0.3px">専門的・技術的分野</span></span>
<span class="t" style="left:488.5px;top:403px;font-size:12px;color:#505050"><span style="font-size:10.9px;letter-spacing:0.3px">就労上のトラブルの有無</span></span>
<span class="t" style="left:625.5px;top:403px;font-size:12px;color:#505050"><span style="font-size:10.9px;letter-spacing:0.3px">あり</span></span>
<span class="t" style="left:960px;top:403px;width:82.5px;text-align:right;font-size:12px;color:#404040">16.5</span>
<span class="t" style="left:29.6px;top:422px;font-size:12px;color:#404040">2023/10/1</span>
<span class="t" style="left:89.5px;top:422px;font-size:12px;color:#505050"><span style="font-size:10.9px;letter-spacing:0.3px">在留資格</span></span>
<span class="t" style="left:190.5px;top:422px;font-size:12px;color:#505050"><span style="font-size:10.9px;letter-spacing:0.3px">専門的・技術的分野</span></span>
<span class="t" style="left:488.5px;top:422px;font-size:12px;color:#505050"><span style="font-size:10.9px;letter-spacing:0.3px">トラブルの内容</span> (MA)</span>
<span class="t" style="left:625.5px;top:422px;font-size:12px;color:#505050"><span style="font-size:10.9px;letter-spacing:0.3px">会社に入るために必要な費用の説明がなかった</span></span>
<span class="t" style="left:960px;top:422px;width:82.5px;text-align:right;font-size:12px;color:#404040">2.7</span>
<span class="t" style="left:29.6px;top:441px;font-size:12px;color:#404040">2023/10/1</span>
<span class="t" style="left:89.5px;top:441px;font-size:12px;color:#505050"><span style="font-size:10.9px;letter-spacing:0.3px">在留資格</span></span>
<span class="t" style="left:190.5px;top:441px;font-size:12px;color:#505050"><span style="font-size:10.9px;letter-spacing:0.3px">専門的・技術的分野</span></span>
<span class="t" style="left:488.5px;top:441px;font-size:12px;color:#505050"><span style="font-size:10.9px;letter-spacing:0.3px">トラブルの内容</span> (MA)</span>
<span class="t" style="left:625.5px;top:441px;font-size:12px;color:#505050"><span style="font-size:10.9px;letter-spacing:0.3px">紹介会社（送出し機関含む）の費用が高かった</span></span>
<span class="t" style="left:960px;top:441px;width:82.5px;text-align:right;font-size:12px;color:#404040">22</span>
<span class="t" style="left:29.6px;top:460px;font-size:12px;color:#404040">2023/10/1</span>
<span class="t" style="left:89.5px;top:460px;font-size:12px;color:#505050"><span style="font-size:10.9px;letter-spacing:0.3px">在留資格</span></span>
<span class="t" style="left:190.5px;top:460px;font-size:12px;color:#505050"><span style="font-size:10.9px;letter-spacing:0.3px">専門的・技術的分野</span></span>
<span class="t" style="left:488.5px;top:460px;font-size:12px;color:#505050"><span style="font-size:10.9px;letter-spacing:0.3px">トラブルの内容</span> (MA)</span>
<span class="t" style="left:625.5px;top:460px;font-size:12px;color:#505050"><span style="font-size:10.9px;letter-spacing:0.3px">事前の説明以上に会社に入るための費用がかかった</span></span>
<span class="t" style="left:960px;top:460px;width:82.5px;text-align:right;font-size:12px;color:#404040">3.7</span>
<span class="t" style="left:29.6px;top:478px;font-size:12px;color:#404040">2023/10/1</span>
<span class="t" style="left:89.5px;top:478px;font-size:12px;color:#505050"><span style="font-size:10.9px;letter-spacing:0.3px">在留資格</span></span>
<span class="t" style="left:190.5px;top:478px;font-size:12px;color:#505050"><span style="font-size:10.9px;letter-spacing:0.3px">専門的・技術的分野</span></span>
<span class="t" style="left:488.5px;top:478px;font-size:12px;color:#505050"><span style="font-size:10.9px;letter-spacing:0.3px">トラブルの内容</span> (MA)</span>
<span class="t" style="left:625.5px;top:478px;font-size:12px;color:#505050"><span style="font-size:10.9px;letter-spacing:0.3px">事前に仕事内容について説明がなかった</span></span>
<span class="t" style="left:960px;top:478px;width:82.5px;text-align:right;font-size:12px;color:#404040">6.8</span>
<span class="t" style="left:29.6px;top:497px;font-size:12px;color:#404040">2023/10/1</span>
<span class="t" style="left:89.5px;top:497px;font-size:12px;color:#505050"><span style="font-size:10.9px;letter-spacing:0.3px">在留資格</span></span>
<span class="t" style="left:190.5px;top:497px;font-size:12px;color:#505050"><span style="font-size:10.9px;letter-spacing:0.3px">専門的・技術的分野</span></span>
<span class="t" style="left:488.5px;top:497px;font-size:12px;color:#505050"><span style="font-size:10.9px;letter-spacing:0.3px">トラブルの内容</span> (MA)</span>
<span class="t" style="left:625.5px;top:497px;font-size:12px;color:#505050"><span style="font-size:10.9px;letter-spacing:0.3px">事前に賃金について説明がなかった</span></span>
<span class="t" style="left:960px;top:497px;width:82.5px;text-align:right;font-size:12px;color:#404040">3.7</span>
<span class="t" style="left:29.6px;top:516px;font-size:12px;color:#404040">2023/10/1</span>
<span class="t" style="left:89.5px;top:516px;font-size:12px;color:#505050"><span style="font-size:10.9px;letter-spacing:0.3px">在留資格</span></span>
<span class="t" style="left:190.5px;top:516px;font-size:12px;color:#505050"><span style="font-size:10.9px;letter-spacing:0.3px">専門的・技術的分野</span></span>
<span class="t" style="left:488.5px;top:516px;font-size:12px;color:#505050"><span style="font-size:10.9px;letter-spacing:0.3px">トラブルの内容</span> (MA)</span>
<span class="t" style="left:625.5px;top:516px;font-size:12px;color:#505050"><span style="font-size:10.9px;letter-spacing:0.3px">事前に労働時間やその他の就業条件について説明がなかった</span></span>
<span class="t" style="left:960px;top:516px;width:82.5px;text-align:right;font-size:12px;color:#404040">4.2</span>
<span class="t" style="left:29.6px;top:535px;font-size:12px;color:#404040">2023/10/1</span>
<span class="t" style="left:89.5px;top:535px;font-size:12px;color:#505050"><span style="font-size:10.9px;letter-spacing:0.3px">在留資格</span></span>
<span class="t" style="left:190.5px;top:535px;font-size:12px;color:#505050"><span style="font-size:10.9px;letter-spacing:0.3px">専門的・技術的分野</span></span>
<span class="t" style="left:488.5px;top:535px;font-size:12px;color:#505050"><span style="font-size:10.9px;letter-spacing:0.3px">トラブルの内容</span> (MA)</span>
<span class="t" style="left:625.5px;top:535px;font-size:12px;color:#505050"><span style="font-size:10.9px;letter-spacing:0.3px">事前に説明された内容と実際の仕事内容が違った</span></span>
<span class="t" style="left:960px;top:535px;width:82.5px;text-align:right;font-size:12px;color:#404040">8.1</span>
<span class="t" style="left:29.6px;top:553px;font-size:12px;color:#404040">2023/10/1</span>
<span class="t" style="left:89.5px;top:553px;font-size:12px;color:#505050"><span style="font-size:10.9px;letter-spacing:0.3px">在留資格</span></span>
<span class="t" style="left:190.5px;top:553px;font-size:12px;color:#505050"><span style="font-size:10.9px;letter-spacing:0.3px">専門的・技術的分野</span></span>
<span class="t" style="left:488.5px;top:553px;font-size:12px;color:#505050"><span style="font-size:10.9px;letter-spacing:0.3px">トラブルの内容</span> (MA)</span>
<span class="t" style="left:625.5px;top:553px;font-size:12px;color:#505050"><span style="font-size:10.9px;letter-spacing:0.3px">事前に説明された条件と実際の就業条件が違った</span></span>
<span class="t" style="left:960px;top:553px;width:82.5px;text-align:right;font-size:12px;color:#404040">7.6</span>
<span class="t" style="left:29.6px;top:572px;font-size:12px;color:#404040">2023/10/1</span>
<span class="t" style="left:89.5px;top:572px;font-size:12px;color:#505050"><span style="font-size:10.9px;letter-spacing:0.3px">在留資格</span></span>
<span class="t" style="left:190.5px;top:572px;font-size:12px;color:#505050"><span style="font-size:10.9px;letter-spacing:0.3px">専門的・技術的分野</span></span>
<span class="t" style="left:488.5px;top:572px;font-size:12px;color:#505050"><span style="font-size:10.9px;letter-spacing:0.3px">トラブルの内容</span> (MA)</span>
<span class="t" style="left:625.5px;top:572px;font-size:12px;color:#505050"><span style="font-size:10.9px;letter-spacing:0.3px">事前の説明以上に高い日本語能力を求められた</span></span>
<span class="t" style="left:960px;top:572px;width:82.5px;text-align:right;font-size:12px;color:#404040">11.9</span>
<span class="t" style="left:29.6px;top:591px;font-size:12px;color:#404040">2023/10/1</span>
<span class="t" style="left:89.5px;top:591px;font-size:12px;color:#505050"><span style="font-size:10.9px;letter-spacing:0.3px">在留資格</span></span>
<span class="t" style="left:190.5px;top:591px;font-size:12px;color:#505050"><span style="font-size:10.9px;letter-spacing:0.3px">専門的・技術的分野</span></span>
<span class="t" style="left:488.5px;top:591px;font-size:12px;color:#505050"><span style="font-size:10.9px;letter-spacing:0.3px">トラブルの内容</span> (MA)</span>
<span class="t" style="left:625.5px;top:591px;font-size:12px;color:#505050"><span style="font-size:10.9px;letter-spacing:0.3px">事前の説明以上に会社に入るまでに時間がかかった</span></span>
<span class="t" style="left:960px;top:591px;width:82.5px;text-align:right;font-size:12px;color:#404040">10.8</span>
<div class="a" style="left:21.8px;top:79px;width:1px;height:516px;background:#C4C4C4"></div>
<div class="a" style="left:22px;top:78.8px;width:65.8px;height:40.2px;border:1.2px solid #217346"></div>
<div class="a" style="left:23.2px;top:80px;width:63.4px;height:37.8px;border:1.1px solid rgba(230,250,220,0.6)"></div>
<div class="a" style="left:85.5px;top:117px;width:3px;height:3px;background:#217346"></div>
<div class="a" style="left:1184px;top:61px;width:16px;height:534px;background:#E6E9F0"></div>
<div class="a" style="left:1185.5px;top:62px;width:12.7px;height:535px;border-radius:6.5px;background:#F3F3F3"></div>
<svg style="left:1188px;top:64px" width="9" height="8" viewBox="0 0 9 8"><path d="M4.5 1 L8 6.2 H1 Z" fill="#6E6E6E"/></svg>
<div class="a" style="left:1188.8px;top:74px;width:7.2px;height:14px;border-radius:3.6px;background:#6E6E6E"></div>
<svg style="left:1188px;top:587px" width="10" height="8" viewBox="0 0 10 8"><path d="M1 1 H9 L5 6.5 Z" fill="#6E6E6E"/></svg>
<div class="a" style="left:0;top:595px;width:1200px;height:26px;background:#E6E9F0"></div>
<div class="a" style="left:0;top:619.4px;width:1200px;height:2px;background:#CACACA"></div>
<svg style="left:18px;top:603px" width="8" height="10" viewBox="0 0 8 10"><path d="M6 1 L2 5 L6 9" fill="none" stroke="#9a9a9a" stroke-width="1"/></svg>
<svg style="left:44px;top:603px" width="8" height="10" viewBox="0 0 8 10"><path d="M2 1 L6 5 L2 9" fill="none" stroke="#9a9a9a" stroke-width="1"/></svg>
<div class="a" style="left:88px;top:594px;width:38px;height:23px;border-radius:0 0 4px 4px;background:#fff"></div>
<span class="t" id="t_data" style="left:95.00px;top:599.50px;font-size:12px;color:#333;transform:scaleX(0.9583);transform-origin:0 0;">data</span>
<div class="a" style="left:94.2px;top:614px;width:26px;height:1.6px;border-radius:1px;background:#2A8350"></div>
<div class="a" style="left:129.5px;top:602px;width:1px;height:12px;background:#D2D4D8"></div>
<span class="t" id="t_pivot" style="left:141.00px;top:600.80px;font-size:12.5px;color:#333;transform:scaleX(0.9407);transform-origin:0 0;">pivot</span>
<div class="a" style="left:177px;top:602px;width:1px;height:12px;background:#D2D4D8"></div>
<svg style="left:210px;top:603px" width="11" height="11" viewBox="0 0 11 11"><path d="M5.5 1 V10 M1 5.5 H10" stroke="#424242" stroke-width="1.2"/></svg>
<div class="a" style="left:721.5px;top:603.6px;width:2px;height:2px;border-radius:50%;background:#444"></div>
<div class="a" style="left:721.5px;top:607.1px;width:2px;height:2px;border-radius:50%;background:#444"></div>
<div class="a" style="left:721.5px;top:610.6px;width:2px;height:2px;border-radius:50%;background:#444"></div>
<div class="a" style="left:735px;top:601.3px;width:450.5px;height:12.7px;border-radius:6.5px;background:#F3F3F3"></div>
<svg style="left:738px;top:603px" width="8" height="10" viewBox="0 0 8 10"><path d="M6.5 1.5 V8.5 L1.2 5 Z" fill="#6E6E6E"/></svg>
<div class="a" style="left:748.3px;top:604px;width:414px;height:7px;border-radius:3.5px;background:#6E6E6E"></div>
<svg style="left:1175.5px;top:603px" width="8" height="10" viewBox="0 0 8 10"><path d="M1.5 1.5 V8.5 L6.8 5 Z" fill="#6E6E6E"/></svg>
</body></html>
